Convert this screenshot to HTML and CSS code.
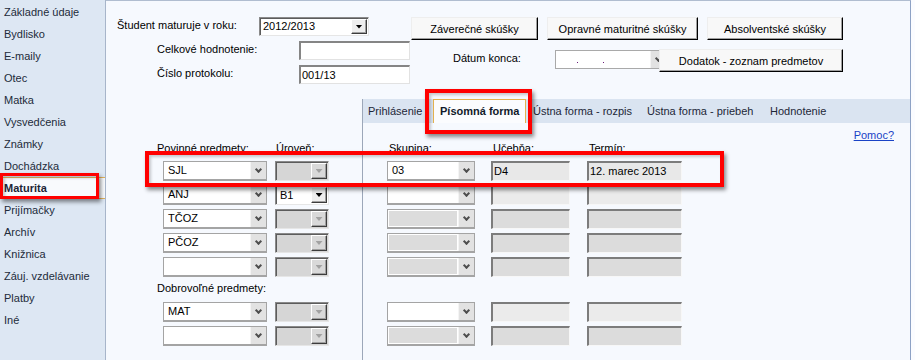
FILE: index.html
```html
<!DOCTYPE html>
<html lang="sk">
<head>
    <meta charset="UTF-8">
    <meta name="viewport" content="width=device-width, initial-scale=1.0">
    <title>Maturita</title>
    <link rel="stylesheet" href="styles.css">
</head>
<body>
<div class="app">

    <nav class="sidebar">
        <div class="nav-item">Základné údaje</div>
        <div class="nav-item">Bydlisko</div>
        <div class="nav-item">E-maily</div>
        <div class="nav-item">Otec</div>
        <div class="nav-item">Matka</div>
        <div class="nav-item">Vysvedčenia</div>
        <div class="nav-item">Známky</div>
        <div class="nav-item">Dochádzka</div>
        <div class="nav-item active">Maturita</div>
        <div class="nav-item">Prijímačky</div>
        <div class="nav-item">Archív</div>
        <div class="nav-item">Knižnica</div>
        <div class="nav-item">Záuj. vzdelávanie</div>
        <div class="nav-item">Platby</div>
        <div class="nav-item">Iné</div>
    </nav>

    <div class="content">
        <div class="top">
            <div class="top-left">
                <div class="form-row">
                    <span class="lbl lbl-year">Študent maturuje v roku:</span>
                    <div class="classic-combo year-combo">
                        <span class="val">2012/2013</span>
                        <span class="btn3d"><i class="tri"></i></span>
                    </div>
                </div>
                <div class="form-row sub">
                    <span class="lbl lbl-sub">Celkové hodnotenie:</span>
                    <div class="classic-input"></div>
                </div>
                <div class="form-row sub">
                    <span class="lbl lbl-sub">Číslo protokolu:</span>
                    <div class="classic-input">001/13</div>
                </div>
            </div>

            <div class="top-right">
                <div class="btn-row">
                    <button class="win-btn btn-zav">Záverečné skúšky</button>
                    <button class="win-btn btn-opr">Opravné maturitné skúšky</button>
                    <button class="win-btn btn-abs">Absolventské skúšky</button>
                </div>
                <div class="date-row">
                    <span class="lbl lbl-date">Dátum konca:</span>
                    <div class="date-box">
                        <span class="date-val"><i class="dot"></i><i class="dot dot2"></i></span>
                        <span class="combo-btn"><i class="chev"></i></span>
                    </div>
                    <button class="win-btn btn-dod">Dodatok - zoznam predmetov</button>
                </div>
            </div>
        </div>

        <div class="bottom">
            <!-- subjects + level, left of the tab control -->
            <div class="subjects">
                <div class="col-head"><span class="h-subj">Povinné predmety:</span><span>Úroveň:</span></div>

                <div class="field-row first">
                    <div class="combo subj"><span class="val">SJL</span><span class="combo-btn"><i class="chev"></i></span></div>
                    <div class="classic-combo lvl off"><span class="val"></span><span class="btn3d"><i class="tri"></i></span></div>
                </div>
                <div class="field-row">
                    <div class="combo subj"><span class="val">ANJ</span><span class="combo-btn"><i class="chev"></i></span></div>
                    <div class="classic-combo lvl"><span class="val">B1</span><span class="btn3d"><i class="tri"></i></span></div>
                </div>
                <div class="field-row">
                    <div class="combo subj"><span class="val">TČOZ</span><span class="combo-btn"><i class="chev"></i></span></div>
                    <div class="classic-combo lvl off"><span class="val"></span><span class="btn3d"><i class="tri"></i></span></div>
                </div>
                <div class="field-row">
                    <div class="combo subj"><span class="val">PČOZ</span><span class="combo-btn"><i class="chev"></i></span></div>
                    <div class="classic-combo lvl off"><span class="val"></span><span class="btn3d"><i class="tri"></i></span></div>
                </div>
                <div class="field-row">
                    <div class="combo subj"><span class="val"></span><span class="combo-btn"><i class="chev"></i></span></div>
                    <div class="classic-combo lvl off"><span class="val"></span><span class="btn3d"><i class="tri"></i></span></div>
                </div>

                <div class="section-lbl">Dobrovoľné predmety:</div>

                <div class="field-row first">
                    <div class="combo subj"><span class="val">MAT</span><span class="combo-btn"><i class="chev"></i></span></div>
                    <div class="classic-combo lvl off"><span class="val"></span><span class="btn3d"><i class="tri"></i></span></div>
                </div>
                <div class="field-row">
                    <div class="combo subj"><span class="val"></span><span class="combo-btn"><i class="chev"></i></span></div>
                    <div class="classic-combo lvl off"><span class="val"></span><span class="btn3d"><i class="tri"></i></span></div>
                </div>
            </div>

            <div class="tabs">
                <div class="tab-strip">
                    <div class="tab t1">Prihlásenie</div>
                    <div class="tab active">Písomná forma</div>
                    <div class="tab t3">Ústna forma - rozpis</div>
                    <div class="tab t4">Ústna forma - priebeh</div>
                    <div class="tab t5">Hodnotenie</div>
                </div>
                <div class="tab-panel">
                    <div class="help-row"><a class="help" href="#">Pomoc?</a></div>
                    <div class="col-head"><span class="h-grp">Skupina:</span><span class="h-room">Učebňa:</span><span>Termín:</span></div>

                    <div class="field-row first">
                        <div class="combo grp"><span class="val">03</span><span class="combo-btn"><i class="chev"></i></span></div>
                        <div class="inp room">D4</div>
                        <div class="inp term">12. marec 2013</div>
                    </div>
                    <div class="field-row">
                        <div class="combo grp"><span class="val"></span><span class="combo-btn"><i class="chev"></i></span></div>
                        <div class="inp room light"></div>
                        <div class="inp term light"></div>
                    </div>
                    <div class="field-row">
                        <div class="combo grp off"><span class="val"></span><span class="combo-btn"><i class="chev"></i></span></div>
                        <div class="inp room off"></div>
                        <div class="inp term off"></div>
                    </div>
                    <div class="field-row">
                        <div class="combo grp off"><span class="val"></span><span class="combo-btn"><i class="chev"></i></span></div>
                        <div class="inp room off"></div>
                        <div class="inp term off"></div>
                    </div>
                    <div class="field-row">
                        <div class="combo grp off"><span class="val"></span><span class="combo-btn"><i class="chev"></i></span></div>
                        <div class="inp room off"></div>
                        <div class="inp term off"></div>
                    </div>

                    <div class="section-lbl"></div>

                    <div class="field-row first">
                        <div class="combo grp"><span class="val"></span><span class="combo-btn"><i class="chev"></i></span></div>
                        <div class="inp room light"></div>
                        <div class="inp term light"></div>
                    </div>
                    <div class="field-row">
                        <div class="combo grp off"><span class="val"></span><span class="combo-btn"><i class="chev"></i></span></div>
                        <div class="inp room off"></div>
                        <div class="inp term off"></div>
                    </div>
                </div>
            </div>
        </div>
    </div>

    <!-- red annotation frames drawn over the window -->
    <div class="hl hl-nav"></div>
    <div class="hl hl-tab"></div>
    <div class="hl hl-row"></div>
</div>
</body>
</html>
```

FILE: styles.css
```css
body {
    margin: 0;
    font-family: "Liberation Sans", Arial, sans-serif;
    font-size: 11px;
    color: #000;
    background-color: #fbfcff;
}

.app {
    position: relative;
    display: flex;
    width: 915px;
    height: 360px;
    overflow: hidden;
}

/* left navigation */

.sidebar {
    flex-shrink: 0;
    width: 105px;
    padding-top: 1px;
    background-color: #dde7f3;
    border-right: 1px solid #a7b5ca;
}

.nav-item {
    height: 22px;
    line-height: 22px;
    padding-left: 4px;
    color: #222b3a;
    white-space: nowrap;
}

.nav-item.active {
    box-sizing: border-box;
    line-height: 20px;
    font-weight: bold;
    color: #1c2536;
    background-color: #f8fafd;
    border-top: 1px solid #e3b35a;
    border-bottom: 1px solid #e3b35a;
}

/* main window */

.content {
    flex: 1;
    margin-right: 4px;
    background-color: #f6f9fe;
    border-top: 1px solid #b0bdd0;
    border-right: 1px solid #8ea2c5;
}

.top {
    display: flex;
    height: 97px;
}

.top-left {
    width: 305px;
    padding-top: 16px;
}

.form-row {
    display: flex;
    align-items: flex-start;
    padding-left: 11px;
}

.form-row.sub {
    margin-top: 5px;
    padding-left: 51px;
}

.lbl {
    line-height: 13px;
    padding-top: 2px;
    white-space: nowrap;
}

.lbl-year {
    width: 142px;
}

.lbl-sub {
    width: 142px;
}

.classic-combo {
    display: flex;
    box-sizing: border-box;
    padding: 1px;
    background-color: #fff;
    border: 1px solid;
    border-color: #8a8a8a #e6e6e6 #e6e6e6 #8a8a8a;
    box-shadow: inset 1px 1px 0 #5c5c5c;
}

.classic-combo .val {
    flex: 1;
    padding-left: 3px;
    line-height: 15px;
    white-space: nowrap;
    overflow: hidden;
}

.year-combo {
    width: 110px;
    height: 19px;
}

.year-combo .val {
    padding-left: 2px;
}

.btn3d {
    display: flex;
    align-items: center;
    justify-content: center;
    box-sizing: border-box;
    width: 16px;
    background-color: #eeeeee;
    border: 1px solid;
    border-color: #fff #3c3c3c #3c3c3c #fff;
    box-shadow: inset -1px -1px 0 #a0a0a0;
}

.tri {
    width: 7px;
    height: 4px;
    background-color: #000;
    clip-path: polygon(0 0, 100% 0, 50% 100%);
}

.classic-input {
    box-sizing: border-box;
    width: 111px;
    height: 19px;
    padding-left: 1px;
    line-height: 16px;
    background-color: #fff;
    border-style: solid;
    border-width: 2px 1px 1px 2px;
    border-color: #858585 #e2e2e2 #e2e2e2 #858585;
}

.top-right {
    padding-top: 16px;
}

.btn-row {
    display: flex;
    gap: 9px;
}

.win-btn {
    box-sizing: border-box;
    height: 23px;
    padding: 0;
    font: inherit;
    color: #000;
    background-color: #f8f8f8;
    border: 1px solid;
    border-color: #eeeeee #000 #000 #eeeeee;
    box-shadow: inset -1px -1px 0 #a0a0a0;
    white-space: nowrap;
}

.btn-zav { width: 127px; }
.btn-opr { width: 151px; }
.btn-abs { width: 136px; }
.btn-dod { width: 184px; }

.date-row {
    display: flex;
    align-items: flex-start;
    margin-top: 9px;
}

.lbl-date {
    width: 102px;
    margin-left: 42px;
    padding-top: 3px;
}

.date-box {
    display: flex;
    box-sizing: border-box;
    width: 104px;
    height: 19px;
    margin-top: 1px;
    overflow: hidden;
    background-color: #fff;
    border: 1px solid #a9a9a9;
    border-right: none;
}

.date-val {
    display: flex;
    flex-shrink: 0;
    width: 94px;
    padding-top: 11px;
}

.dot {
    width: 1px;
    height: 1px;
    margin-left: 21px;
    background-color: #6b1c7a;
}

.dot2 {
    margin-left: 25px;
}

.date-box .combo-btn {
    flex-shrink: 0;
}

/* lower part */

.bottom {
    display: flex;
    height: 262px;
}

.subjects {
    box-sizing: border-box;
    width: 256px;
    padding: 44px 0 0 51px;
}

.subjects .field-row {
    padding-left: 6px;
}

.col-head {
    display: flex;
    height: 13px;
    line-height: 13px;
    white-space: nowrap;
}

.h-subj { width: 119px; }
.h-grp { width: 104px; }
.h-room { width: 96px; }

.field-row {
    display: flex;
    height: 20px;
    margin-top: 4px;
}

.field-row.first {
    margin-top: 6px;
}

.section-lbl {
    height: 13px;
    margin-top: 5px;
    line-height: 13px;
    white-space: nowrap;
}

.section-lbl + .field-row.first {
    margin-top: 7px;
}

.combo {
    display: flex;
    box-sizing: border-box;
    background-color: #fff;
    border: 1px solid #a4a4a4;
    border-bottom-width: 2px;
}

.combo .val {
    flex: 1;
    padding-left: 4px;
    line-height: 17px;
    white-space: nowrap;
    overflow: hidden;
}

.combo.off .val {
    background-color: #dcdcdc;
    box-shadow: inset 0 0 0 1px #fff;
}

.combo-btn {
    display: flex;
    align-items: center;
    justify-content: center;
    box-sizing: border-box;
    width: 16px;
    background-color: #e2e2e2;
    border-left: 1px solid #f4f4f4;
}

.chev {
    width: 3px;
    height: 3px;
    margin-top: -3px;
    border-right: 2px solid #4e4e4e;
    border-bottom: 2px solid #4e4e4e;
    transform: rotate(45deg);
}

.subj {
    width: 104px;
}

.lvl {
    width: 54px;
    height: 20px;
    margin-left: 8px;
}

.lvl .val {
    line-height: 16px;
}

.lvl.off .val {
    background-color: #d6d6d6;
}

.lvl.off {
    background-color: #d6d6d6;
}

.lvl.off .btn3d {
    background-color: #d9d9d9;
}

.lvl.off .tri {
    background-color: #a2a2a2;
}

/* tab control */

.tabs {
    flex: 1;
    margin-top: 1px;
    border-left: 1px solid #9ca7b9;
}

.tab-strip {
    display: flex;
    height: 24px;
    background-color: #dae4f1;
}

.tab {
    box-sizing: border-box;
    height: 24px;
    padding-left: 7px;
    line-height: 24px;
    color: #1d2738;
    white-space: nowrap;
}

.tab.t1 { width: 70px; padding-left: 5px; }
.tab.t3 { width: 114px; }
.tab.t4 { width: 123px; }

.tab.active {
    width: 93px;
    padding-left: 6px;
    line-height: 23px;
    font-weight: bold;
    color: #111a2a;
    background-color: #fbfcfe;
    border: 1px solid #e4b24f;
    border-bottom: none;
}

.tab-panel {
    padding: 6px 16px 0 24px;
}

.help-row {
    height: 13px;
    line-height: 13px;
    text-align: right;
}

.help {
    color: #1a43c6;
    text-decoration: underline;
}

.tab-panel .col-head {
    padding-left: 2px;
}

.grp {
    width: 88px;
}

.inp {
    box-sizing: border-box;
    height: 20px;
    padding-left: 1px;
    line-height: 17px;
    white-space: nowrap;
    background-color: #e8e8e8;
    border-style: solid;
    border-width: 2px 1px 1px 2px;
    border-color: #7c7c7c #f7f7f7 #f7f7f7 #7c7c7c;
}

.inp.light {
    background-color: #ebebeb;
}

.inp.off {
    background-color: #dcdcdc;
}

.room {
    width: 79px;
    margin-left: 16px;
}

.term {
    width: 95px;
    margin-left: 17px;
}

/* red annotation frames */

.hl {
    position: absolute;
    box-sizing: border-box;
    border: 4px solid #ff0000;
    box-shadow: 2px 3px 4px rgba(0, 0, 0, 0.45), inset 2px 2px 3px rgba(0, 0, 0, 0.2);
    pointer-events: none;
}

.hl-nav {
    left: 0;
    top: 173px;
    width: 99px;
    height: 26px;
    border-width: 3px;
}

.hl-tab {
    left: 425px;
    top: 89px;
    width: 107px;
    height: 45px;
}

.hl-row {
    left: 145px;
    top: 151px;
    width: 579px;
    height: 36px;
}
```
